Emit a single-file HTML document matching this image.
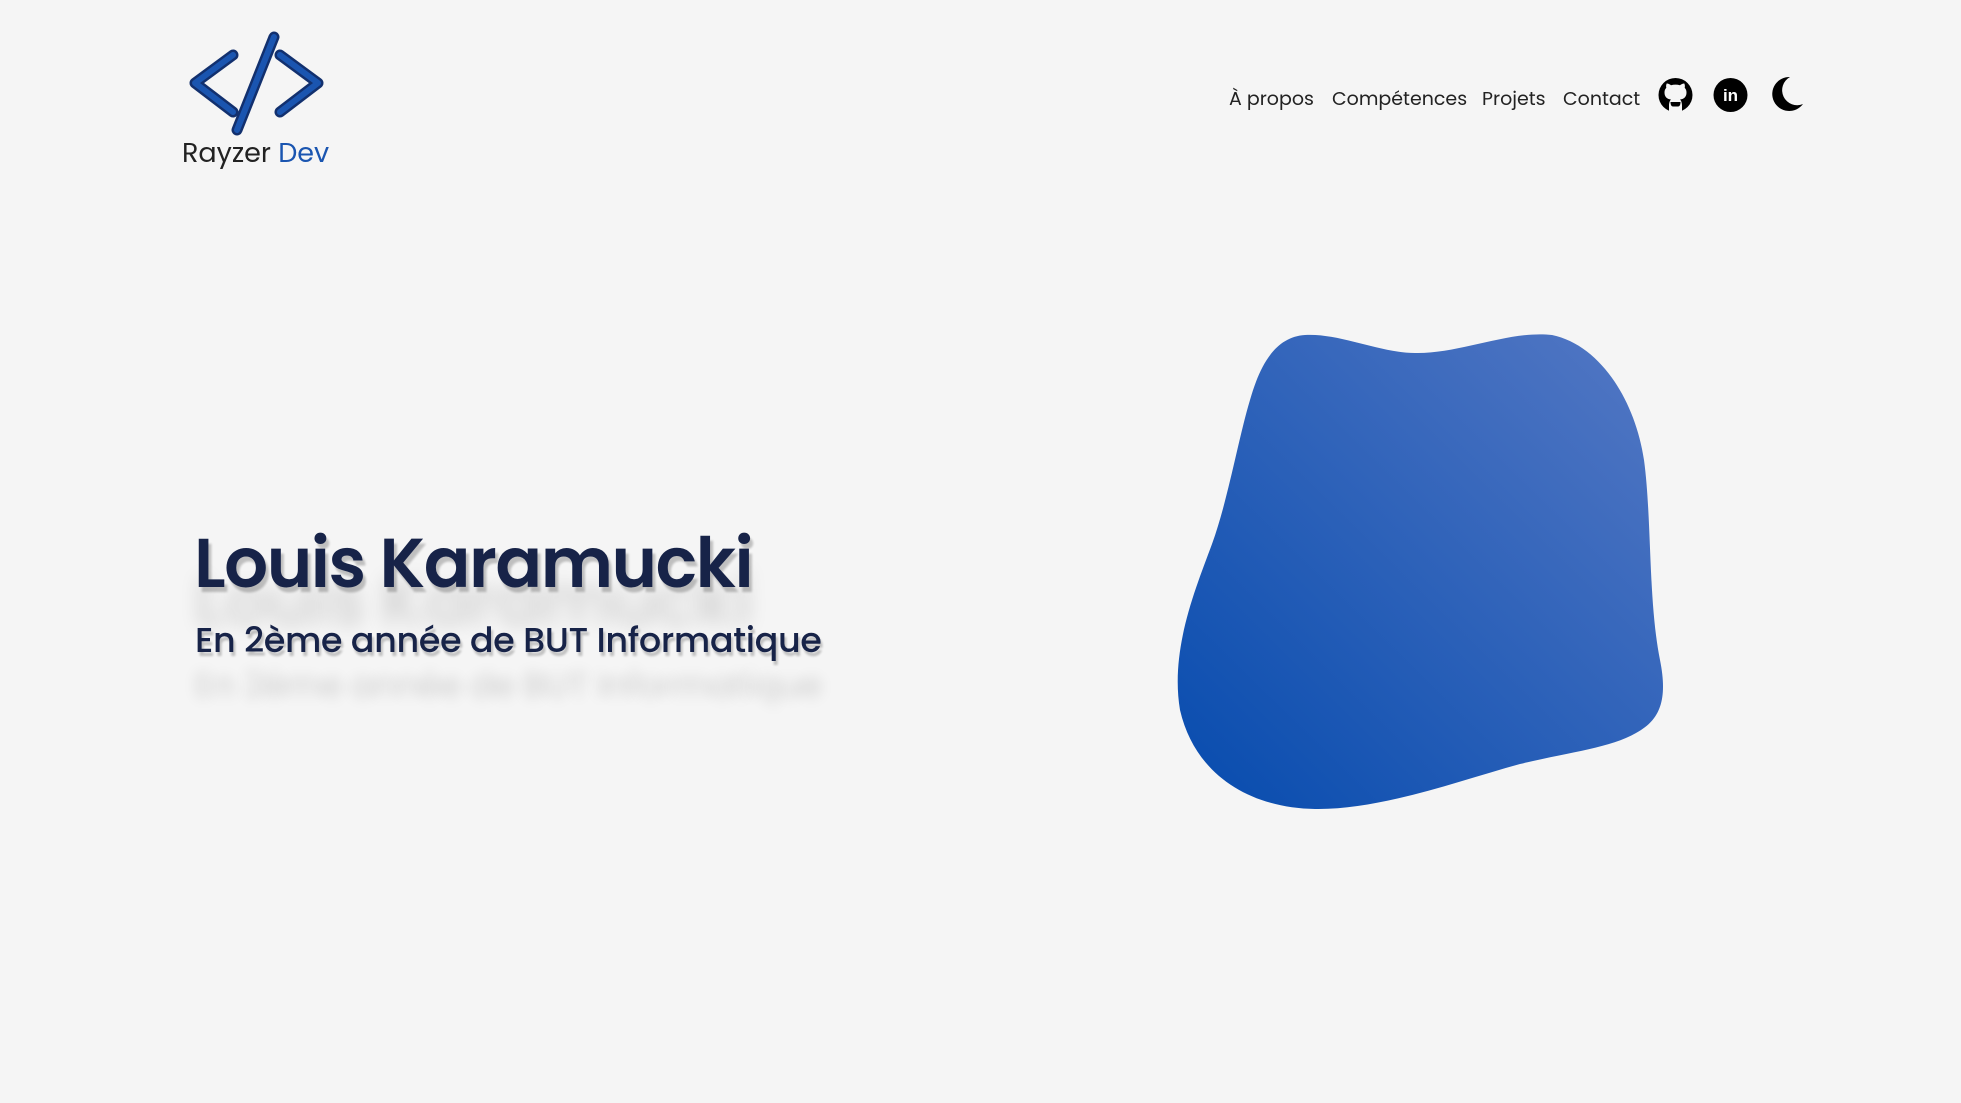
<!DOCTYPE html>
<html><head><meta charset="utf-8"><style>
html,body{margin:0;padding:0;width:1961px;height:1103px;background:#f5f5f5;overflow:hidden;font-family:"Poppins","Liberation Sans",sans-serif;}
.nav{position:absolute;top:84px;font-size:19px;color:#222;}
.nav span{position:absolute;white-space:nowrap;}
h1{position:absolute;left:194px;top:513px;margin:0;font-size:69px;font-weight:600;color:#172348;letter-spacing:-1.5px;text-shadow:3px 5px 2px rgba(0,0,0,.22),0 38px 18px rgba(0,0,0,.13);white-space:nowrap;}
h2{position:absolute;left:195px;top:614px;margin:0;font-size:35px;font-weight:500;color:#172348;letter-spacing:-0.4px;text-shadow:2px 4px 2px rgba(0,0,0,.22),0 45px 14px rgba(0,0,0,.14);white-space:nowrap;}
.logo{position:absolute;left:182px;top:134px;font-size:27px;color:#222;white-space:nowrap;}
</style></head><body>
<svg width="1961" height="1103" style="position:absolute;left:0;top:0">
<defs><linearGradient id="g" x1="0" y1="1" x2="1" y2="0"><stop offset="0" stop-color="#064bae"/><stop offset="1" stop-color="#5478c4"/></linearGradient></defs>
<g stroke-linecap="round" stroke-linejoin="round" fill="none">
<g stroke="#12306e" stroke-width="11"><path d="M233 55 L195 83 L233 112"/><path d="M274 37 L237 130"/><path d="M280 55 L318 83 L280 112"/></g>
<g stroke="#1a55b0" stroke-width="6"><path d="M233 55 L195 83 L233 112"/><path d="M274 37 L237 130"/><path d="M280 55 L318 83 L280 112"/></g>
</g>
<path fill="url(#g)" d="M1305 335 C1340 333 1380 353 1415 353 C1460 354 1510 330 1552 335 C1600 345 1635 400 1644 460 C1652 520 1648 600 1660 660 C1668 700 1660 720 1636 733 C1610 748 1570 752 1520 764 C1455 782 1380 810 1315 809 C1250 808 1195 775 1180 710 C1170 650 1195 590 1212 544 C1228 500 1238 440 1250 400 C1260 365 1275 337 1305 335 Z"/>
<g transform="translate(1658,78)"><circle cx="17.5" cy="17" r="17" fill="#000"/><path d="M11 28 C11 24 12 22.5 13 21.5 C9 21 6.5 19 6.5 14.5 C6.5 12.5 7.2 11 8.3 9.8 C8 8.5 8 7 8.7 5.5 C10.5 5.5 12 6.5 13 7.3 C16 6.4 19 6.4 22 7.3 C23 6.5 24.5 5.5 26.3 5.5 C27 7 27 8.5 26.7 9.8 C27.8 11 28.5 12.5 28.5 14.5 C28.5 19 26 21 22 21.5 C23 22.5 24 24 24 28 L24 34 L11 34 Z" fill="#f5f5f5"/><path d="M12.5 24 C12.5 26 13 28.5 15 28.5 L20 28.5 C22 28.5 22.5 26 22.5 24 Z" fill="#000"/></g>
<g transform="translate(1713,78)"><circle cx="17.5" cy="17" r="17" fill="#000"/><text x="17.5" y="23" font-size="17" font-weight="bold" text-anchor="middle" font-family="Liberation Sans, sans-serif" fill="#fff">in</text></g>
<path d="M1790 77 A17 17 0 1 0 1803 104 A15 15 0 0 1 1790 77 Z" fill="#000"/>
</svg>
<div class="logo">Rayzer <span style="color:#1a55b0">Dev</span></div>
<div class="nav">
<span style="left:1229px">À propos</span>
<span style="left:1332px">Compétences</span>
<span style="left:1482px">Projets</span>
<span style="left:1563px">Contact</span>
</div>
<h1>Louis Karamucki</h1>
<h2>En 2ème année de BUT Informatique</h2>
</body></html>
